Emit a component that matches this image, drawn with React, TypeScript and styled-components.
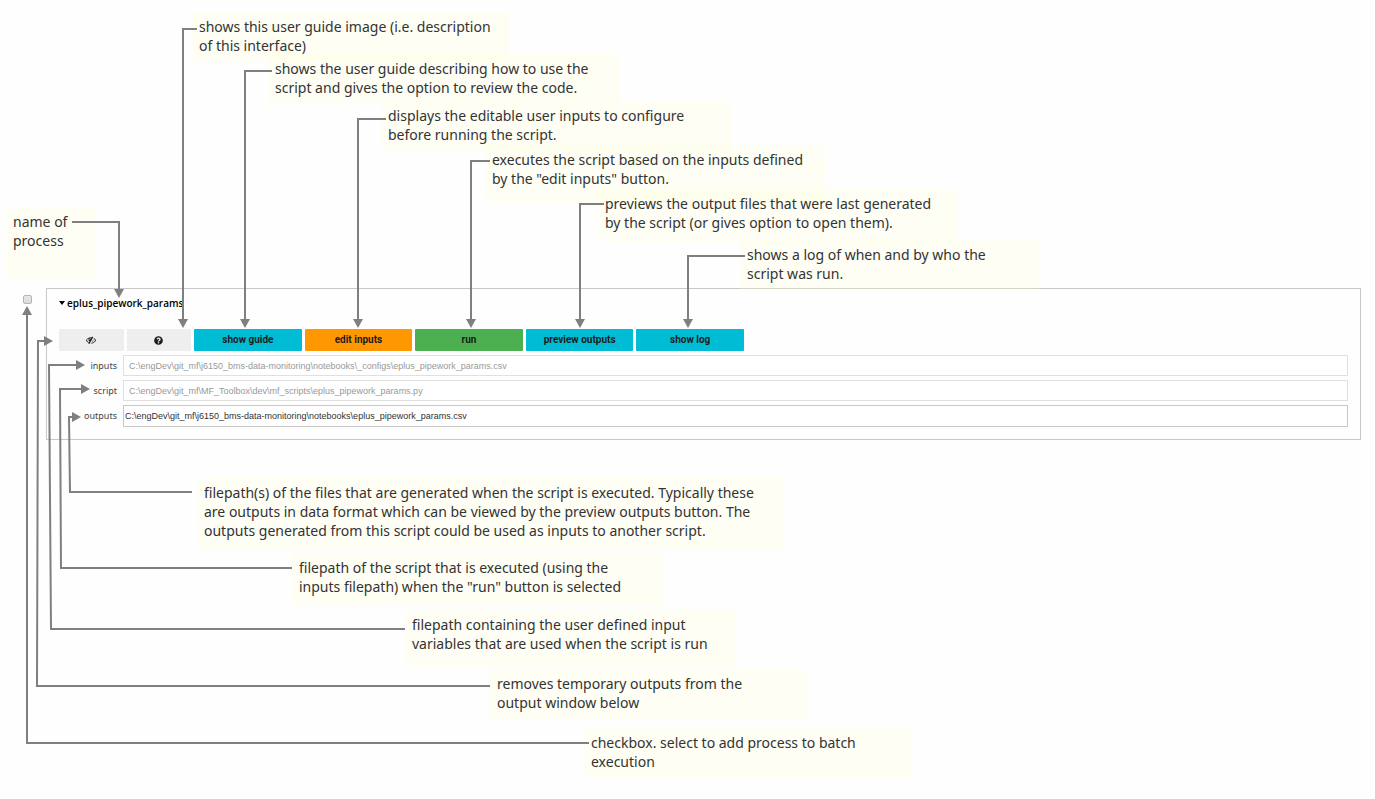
import React, { useState } from "react";
import styled, { createGlobalStyle } from "styled-components";
import { FaQuestionCircle } from "react-icons/fa";

const GlobalStyle = createGlobalStyle`
  *, *::before, *::after { box-sizing: border-box; }
  body {
    margin: 0;
    background: #fefefe;
    color: #333;
    font-family: "Noto Sans", "Open Sans", sans-serif;
  }
`;

const colors = {
  neutral: "#eeeeee",
  info: "#00bcd4",
  warning: "#ff9800",
  success: "#4caf50",
  connector: "#7f7f7f",
};

type Tone = "neutral" | "info" | "warning" | "success";

const Guide = styled.main`
  position: relative;
  min-height: 799px;
  padding: 288px 14px 0 23px;
`;

const ProcessRow = styled.section`
  display: flex;
  align-items: flex-start;
  gap: 14px;
`;

const BatchCheckbox = styled.input`
  appearance: none;
  flex: none;
  width: 9px;
  height: 9px;
  margin: 7px 0 0;
  border: 1px solid #b4b4b4;
  border-radius: 2px;
  background: linear-gradient(#e8e8e8, #dcdcdc);

  &:checked {
    background: #7f7f7f;
  }
`;

const Panel = styled.div`
  flex: 1;
  min-width: 0;
  padding: 7px 12px 12px;
  border: 1px solid #c8c8c8;
`;

const PanelToggle = styled.button`
  display: flex;
  align-items: center;
  gap: 2px;
  height: 14px;
  margin: 0;
  padding: 0;
  border: 0;
  background: none;
  color: #000;
  font: 600 10px/14px "Open Sans", "Noto Sans", sans-serif;
`;

const Toolbar = styled.div`
  display: grid;
  grid-template-columns: 3fr 3fr 5fr 5fr 5fr 5fr 5fr;
  gap: 3px;
  max-width: 685px;
  margin-top: 19px;
`;

const ToolButton = styled.button<{ $tone: Tone }>`
  display: flex;
  align-items: center;
  justify-content: center;
  min-width: 0;
  height: 22px;
  padding: 0;
  border: 0;
  border-radius: 1px;
  background: ${(p) => colors[p.$tone]};
  color: #1c1c1c;
  font: 700 10px/12px Roboto, "Liberation Sans", sans-serif;
`;

const Fields = styled.div`
  display: grid;
  gap: 4px;
  margin-top: 4px;
`;

const Field = styled.div`
  display: grid;
  grid-template-columns: 58px 1fr;
  align-items: center;
  gap: 6px;
`;

const FieldLabel = styled.label`
  color: #444;
  font-size: 9px;
  line-height: 12px;
  text-align: right;
`;

const PathInput = styled.input<{ $editable?: boolean }>`
  width: 100%;
  height: ${(p) => (p.$editable ? 22 : 21)}px;
  padding: 0 ${(p) => (p.$editable ? 1 : 5)}px;
  border: 1px solid ${(p) => (p.$editable ? "#c8c8c8" : "#e0e0e0")};
  border-radius: 0;
  background: #fff;
  color: ${(p) => (p.$editable ? "#333" : "#999")};
  font: 400 9px/12px "Liberation Sans", Arial, sans-serif;
  outline: none;
`;

const Note = styled.p<{ $x: number; $y: number; $w: number; $h: number }>`
  position: absolute;
  left: ${(p) => p.$x}px;
  top: ${(p) => p.$y}px;
  width: ${(p) => p.$w}px;
  height: ${(p) => p.$h}px;
  margin: 0;
  padding: 5px 7px;
  background: rgba(255, 255, 204, 0.2);
  font-size: 14px;
  line-height: 19px;
  white-space: pre;
`;

const Connectors = styled.svg`
  position: absolute;
  left: 0;
  top: 0;
  pointer-events: none;
`;

const notes = [
  { x: 192, y: 12, w: 317, h: 49, lines: ["shows this user guide image (i.e. description", "of this interface)"] },
  { x: 268, y: 54, w: 351, h: 50, lines: ["shows the user guide describing how to use the", "script and gives the option to review the code."] },
  { x: 381, y: 101, w: 351, h: 50, lines: ["displays the editable user inputs to configure", "before running the script."] },
  { x: 485, y: 145, w: 341, h: 58, lines: ["executes the script based on the inputs defined", 'by the "edit inputs" button.'] },
  { x: 598, y: 189, w: 360, h: 53, lines: ["previews the output files that were last generated", "by the script (or gives option to open them)."] },
  { x: 740, y: 240, w: 299, h: 49, lines: ["shows a log of when and by who the", "script was run."] },
  { x: 6, y: 207, w: 90, h: 72, lines: ["name of", "process"] },
  { x: 197, y: 478, w: 587, h: 71, lines: ["filepath(s) of the files that are generated when the script is executed. Typically these", "are outputs in data format which can be viewed by the preview outputs button. The", "outputs generated from this script could be used as inputs to another script."] },
  { x: 292, y: 553, w: 371, h: 53, lines: ["filepath of the script that is executed (using the", 'inputs filepath) when the "run" button is selected'] },
  { x: 405, y: 610, w: 331, h: 57, lines: ["filepath containing the user defined input", "variables that are used when the script is run"] },
  { x: 490, y: 669, w: 317, h: 50, lines: ["removes temporary outputs from the", "output window below"] },
  { x: 584, y: 728, w: 327, h: 50, lines: ["checkbox. select to add process to batch", "execution"] },
];

type Direction = "down" | "up" | "right";

const connectors: { line: string; tip: [number, number]; to: Direction }[] = [
  { line: "M197 29H183V320", tip: [183, 328], to: "down" },
  { line: "M272 71H245V320", tip: [245, 328], to: "down" },
  { line: "M386 119H358V320", tip: [358, 328], to: "down" },
  { line: "M490 161H471V320", tip: [471, 328], to: "down" },
  { line: "M604 204H580V320", tip: [580, 328], to: "down" },
  { line: "M745 256H688V320", tip: [688, 328], to: "down" },
  { line: "M72 222H119V291", tip: [119, 298], to: "down" },
  { line: "M589 743H27V314", tip: [27, 306], to: "up" },
  { line: "M490 686H37L38 341H45", tip: [53, 341], to: "right" },
  { line: "M405 629H51L49 365H77", tip: [85, 365], to: "right" },
  { line: "M292 568H61L60 389H82", tip: [90, 389], to: "right" },
  { line: "M192 492H70L69 417H73", tip: [81, 417], to: "right" },
];

const heads: Record<Direction, string> = {
  down: "l-5 -9h10z",
  up: "l-5 9h10z",
  right: "l-9 -5v10z",
};

const actions: { label: string; tone: Tone }[] = [
  { label: "show guide", tone: "info" },
  { label: "edit inputs", tone: "warning" },
  { label: "run", tone: "success" },
  { label: "preview outputs", tone: "info" },
  { label: "show log", tone: "info" },
];

const paths = [
  { id: "inputs", value: "C:\\engDev\\git_mf\\j6150_bms-data-monitoring\\notebooks\\_configs\\eplus_pipework_params.csv", editable: false },
  { id: "script", value: "C:\\engDev\\git_mf\\MF_Toolbox\\dev\\mf_scripts\\eplus_pipework_params.py", editable: false },
  { id: "outputs", value: "C:\\engDev\\git_mf\\j6150_bms-data-monitoring\\notebooks\\eplus_pipework_params.csv", editable: true },
];

const Caret = () => (
  <svg width="6" height="4" viewBox="0 0 6 4" fill="currentColor" aria-hidden="true">
    <path d="M0 0h6L3 4z" />
  </svg>
);

const EyeSlash = () => (
  <svg width="10" height="10" viewBox="0 0 1792 1792" fill="currentColor" aria-hidden="true">
    <path d="M555 1335l78-141q-87-63-136-159t-49-203q0-121 61-225-229 117-381 353 167 258 427 375zm389-759q0-20-14-34t-34-14q-125 0-214.5 89.5t-89.5 214.5q0 20 14 34t34 14 34-14 14-34q0-86 61-147t147-61q20 0 34-14t14-34zm363-191q0 7-1 9-105 188-315 566t-316 567l-49 89q-10 16-28 16-12 0-134-70-16-10-16-28 0-12 44-87-143-65-263.500-173t-208.500-245q-20-31-20-69t20-69q153-235 380-371t496-136q89 0 180 17l54-97q10-16 28-16 5 0 18 6t31 15.500 33 18.500 31.500 18.500 19.500 11.500q16 10 16 27zm37 447q0 139-79 253.500t-209 164.500l280-502q8 45 8 84zm448 128q0 35-20 69-39 64-109 145-150 172-347.500 267t-419.500 95l74-132q212-18 392.500-137t301.500-307q-115-179-282-294l63-112q95 64 182.500 153t144.500 184q20 34 20 69z" />
  </svg>
);

export default function App() {
  const [open, setOpen] = useState(true);

  return (
    <>
      <GlobalStyle />
      <Guide>
        <ProcessRow>
          <BatchCheckbox type="checkbox" aria-label="add process to batch execution" />
          <Panel>
            <PanelToggle aria-expanded={open} onClick={() => setOpen(!open)}>
              <Caret />
              eplus_pipework_params
            </PanelToggle>
            {open && (
              <>
                <Toolbar>
                  <ToolButton $tone="neutral" aria-label="remove temporary outputs">
                    <EyeSlash />
                  </ToolButton>
                  <ToolButton $tone="neutral" aria-label="show user guide image">
                    <FaQuestionCircle size={9} aria-hidden="true" />
                  </ToolButton>
                  {actions.map((a) => (
                    <ToolButton key={a.label} $tone={a.tone}>
                      {a.label}
                    </ToolButton>
                  ))}
                </Toolbar>
                <Fields>
                  {paths.map((p) => (
                    <Field key={p.id}>
                      <FieldLabel htmlFor={p.id}>{p.id}</FieldLabel>
                      <PathInput id={p.id} defaultValue={p.value} readOnly={!p.editable} $editable={p.editable} />
                    </Field>
                  ))}
                </Fields>
              </>
            )}
          </Panel>
        </ProcessRow>

        {notes.map((n) => (
          <Note key={n.lines[0]} $x={n.x} $y={n.y} $w={n.w} $h={n.h}>
            {n.lines.join("\n")}
          </Note>
        ))}

        <Connectors width="1000" height="799" aria-hidden="true">
          {connectors.map((c) => (
            <g key={c.line}>
              <path d={c.line} fill="none" stroke={colors.connector} strokeWidth="2" />
              <path d={`M${c.tip[0]} ${c.tip[1]}${heads[c.to]}`} fill={colors.connector} />
            </g>
          ))}
        </Connectors>
      </Guide>
    </>
  );
}
